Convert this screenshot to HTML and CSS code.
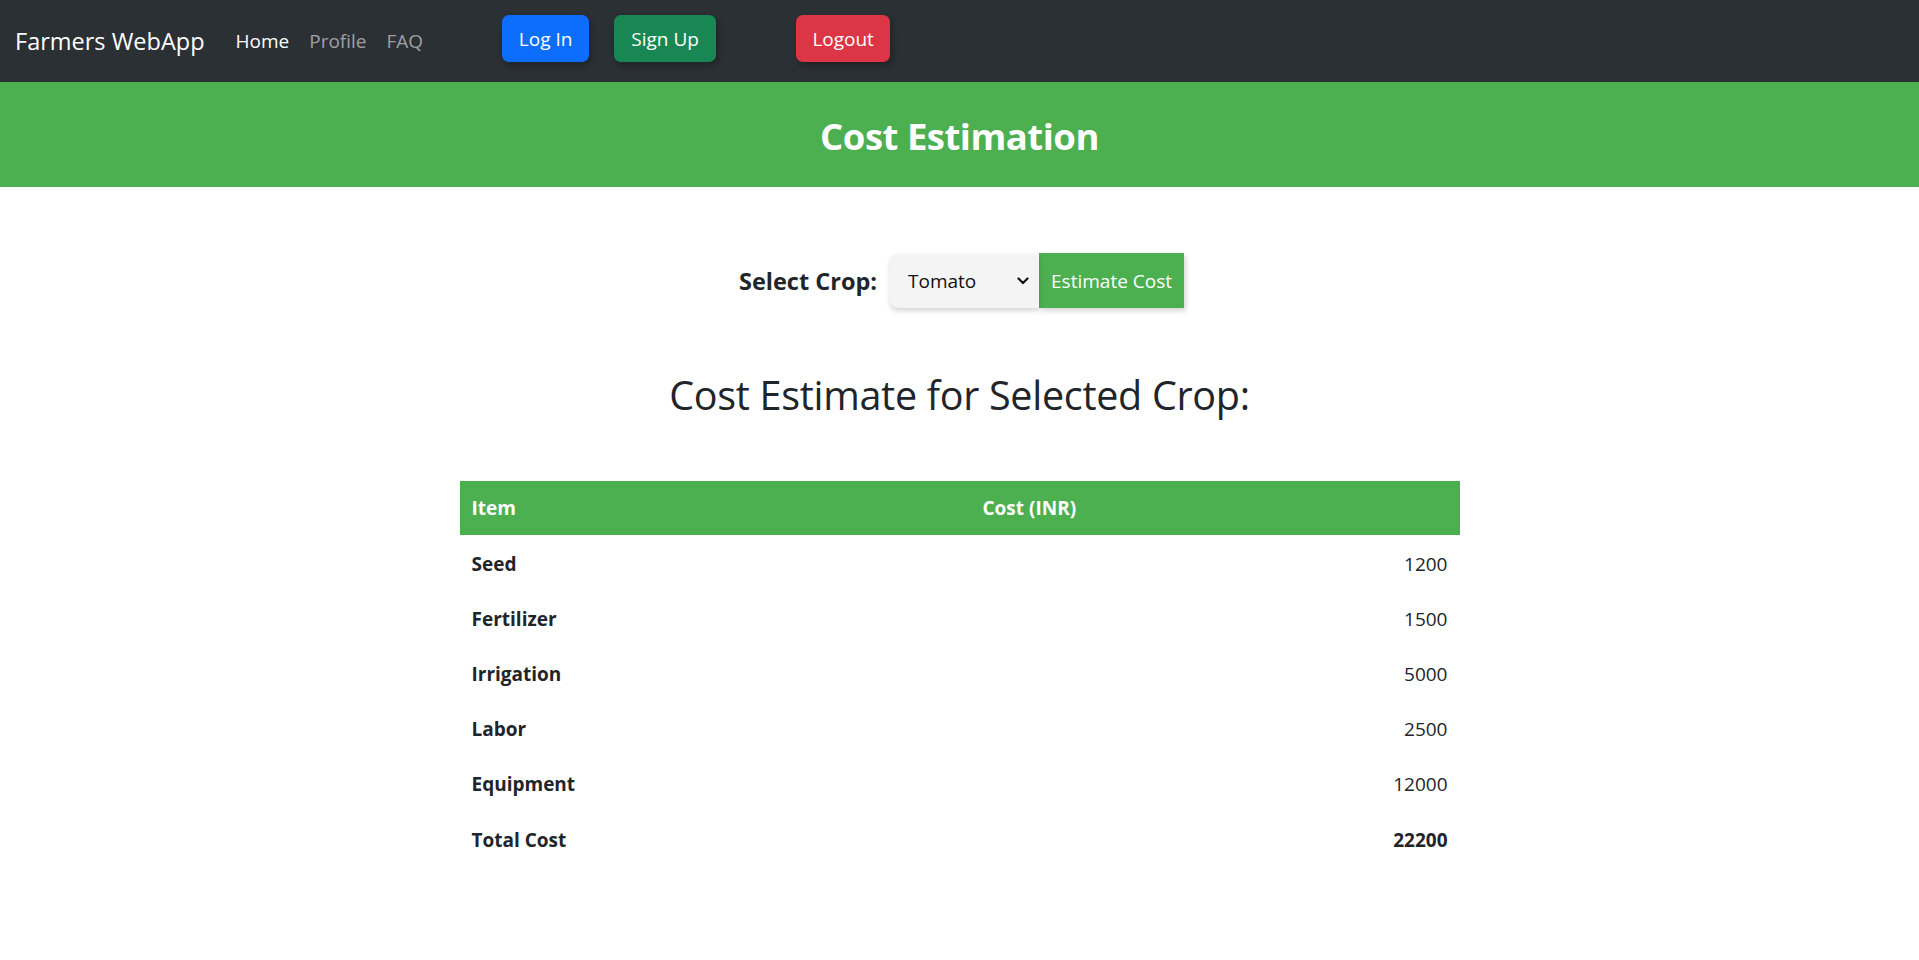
FILE: index.html
```html
<!DOCTYPE html>
<html lang="en">
<head>
<meta charset="utf-8">
<title>Cost Estimation</title>
<link rel="stylesheet" href="styles.css">
</head>
<body>
<nav class="navbar">
  <a class="brand" href="#">Farmers WebApp</a>
  <ul class="nav-links">
    <li><a class="nav-link active" href="#">Home</a></li>
    <li><a class="nav-link" href="#">Profile</a></li>
    <li><a class="nav-link" href="#">FAQ</a></li>
  </ul>
  <div class="auth">
    <button class="btn btn-blue">Log In</button>
    <button class="btn btn-green">Sign Up</button>
    <button class="btn btn-red">Logout</button>
  </div>
</nav>
<header class="page-header">
  <h1>Cost Estimation</h1>
</header>
<main class="content">
  <form class="crop-form">
    <label class="crop-label" for="crop">Select Crop:</label>
    <div class="select-wrap">
      <select id="crop" class="crop-select">
        <option>Tomato</option>
        <option>Wheat</option>
        <option>Rice</option>
      </select>
      <svg class="chevron" width="12" height="8" viewBox="0 0 12 8"><path d="M1.5 1.5 L6 6 L10.5 1.5" fill="none" stroke="#111" stroke-width="2.2" stroke-linecap="round" stroke-linejoin="round"/></svg>
    </div>
    <button type="button" class="estimate-btn">Estimate Cost</button>
  </form>
  <h2 class="estimate-title">Cost Estimate for Selected Crop:</h2>
  <table class="cost-table">
    <colgroup><col class="col-item"><col></colgroup>
    <thead>
      <tr><th>Item</th><th>Cost (INR)</th></tr>
    </thead>
    <tbody>
      <tr><td class="item">Seed</td><td class="num">1200</td></tr>
      <tr><td class="item">Fertilizer</td><td class="num">1500</td></tr>
      <tr><td class="item">Irrigation</td><td class="num">5000</td></tr>
      <tr><td class="item">Labor</td><td class="num">2500</td></tr>
      <tr><td class="item">Equipment</td><td class="num">12000</td></tr>
      <tr class="total"><td class="item">Total Cost</td><td class="num">22200</td></tr>
    </tbody>
  </table>
</main>
</body>
</html>
```

FILE: styles.css
```css
* { box-sizing: border-box; }
html, body { margin: 0; padding: 0; }
body {
  font-family: "Open Sans", "Noto Sans", sans-serif;
  font-size: 19px;
  color: #212529;
  background: #fff;
}

.navbar {
  height: 82px;
  background: #2b3035;
  display: flex;
  align-items: center;
  padding-left: 15px;
}
.brand {
  color: #fff;
  text-decoration: none;
  font-size: 23.5px;
  letter-spacing: 0;
}
.nav-links {
  list-style: none;
  display: flex;
  margin: 0 0 0 31px;
  padding: 0;
  gap: 20px;
}
.nav-link {
  color: rgba(255,255,255,0.55);
  text-decoration: none;
  font-size: 19px;
}
.nav-link.active { color: #fff; }

.auth {
  display: flex;
  align-items: center;
  margin-left: 79px;
  margin-bottom: 5px;
}
.btn {
  font-family: inherit;
  font-size: 19px;
  color: #fff;
  border: none;
  border-radius: 7px;
  height: 47px;
  padding: 0 16px;
  box-shadow: 2px 3px 6px rgba(0,0,0,0.3);
  cursor: pointer;
}
.btn-blue { background: #0d6efd; width: 87px; }
.btn-green { background: #198754; width: 102px; margin-left: 25px; }
.btn-red { background: #dc3545; width: 94px; margin-left: 80px; }

.page-header {
  background: #4caf50;
  height: 105px;
  display: flex;
  align-items: center;
  justify-content: center;
  padding-top: 2px;
}
.page-header h1 {
  margin: 0;
  color: #fff;
  font-size: 36.5px;
  font-weight: 700;
  letter-spacing: -0.5px;
}

.content {
  display: flex;
  flex-direction: column;
  align-items: center;
}
.crop-form {
  margin-top: 66px;
  display: flex;
  align-items: center;
  margin-left: 4px;
}
.crop-label {
  font-weight: 700;
  font-size: 23.5px;
  margin-right: 13px;
}
.select-wrap {
  position: relative;
  display: flex;
}
.crop-select {
  appearance: none;
  -webkit-appearance: none;
  width: 149px;
  height: 54px;
  border: none;
  border-radius: 8px 0 0 8px;
  background: #f4f4f4;
  box-shadow: 0 3px 5px rgba(0,0,0,0.16);
  font-family: inherit;
  font-size: 19px;
  color: #111;
  padding: 0 0 0 18px;
}
.chevron {
  position: absolute;
  right: 10px;
  top: 23px;
  pointer-events: none;
}
.estimate-btn {
  height: 55px;
  width: 145px;
  border: none;
  background: #4caf50;
  color: #fff;
  font-family: inherit;
  font-size: 19px;
  padding: 0;
  box-shadow: 2px 3px 5px rgba(0,0,0,0.16);
}

.estimate-title {
  margin: 60px 0 0;
  font-size: 39.5px;
  font-weight: 500;
  letter-spacing: -0.3px;
  color: #212529;
}

.cost-table {
  margin-top: 59px;
  width: 1000px;
  border-collapse: collapse;
  font-size: 19px;
}
.col-item { width: 511px; }
.cost-table th {
  background: #4caf50;
  color: #fff;
  text-align: left;
  font-weight: 700;
  height: 54px;
  padding: 0 12px;
}
.cost-table td {
  height: 55.2px;
  padding: 2px 12px 0;
}
.cost-table .item { font-weight: 700; }
.cost-table .num { text-align: right; }
.cost-table .total .num { font-weight: 700; }
```
